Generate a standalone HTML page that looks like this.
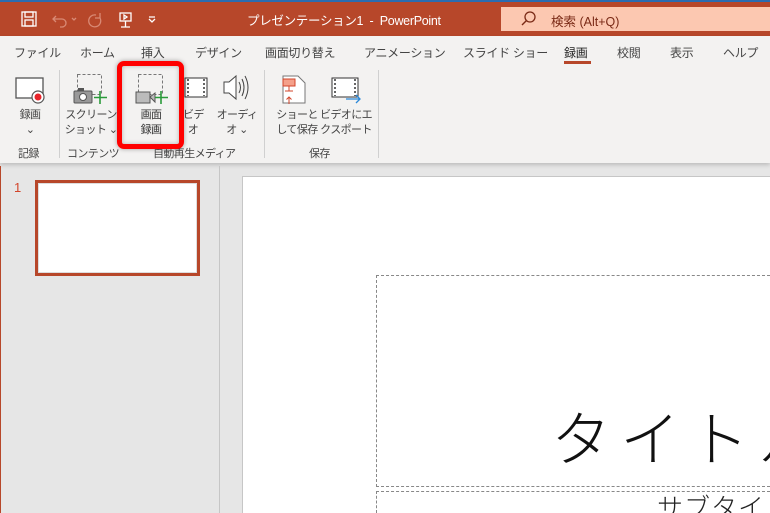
<!DOCTYPE html>
<html><head><meta charset="utf-8"><style>
*{margin:0;padding:0;box-sizing:border-box}
body{width:770px;height:513px;overflow:hidden;position:relative;background:#e6e6e6;font-family:"Liberation Sans","Noto Sans CJK JP",sans-serif;color:#333}
.a{position:absolute;white-space:nowrap}
.t{font-size:12px;color:#444;letter-spacing:-0.3px}
.s{font-size:11px;color:#444;text-align:center;line-height:15px;letter-spacing:-0.6px}
</style></head><body>
<div class="a" style="left:0;top:0;width:770px;height:36px;background:#b7472a"></div>
<div class="a" style="left:0;top:0;width:770px;height:2px;background:#2b6cb0"></div>
<svg class="a" style="left:20px;top:10px" width="150" height="20" viewBox="0 0 150 20">
<g fill="none" stroke="#fff" stroke-width="1.3">
<rect x="2" y="2" width="14" height="14"/><rect x="5" y="2" width="8" height="5"/><rect x="5" y="10" width="8" height="6"/>
</g>
<g fill="none" stroke="#d98a75" stroke-width="1.3">
<path d="M36 6 L33 9 L36 12 M33 9 H42 A4 4 0 0 1 42 17 H40"/><path d="M52 8 l2 2 2-2"/>
<path d="M76 5 A6 6 0 1 0 80 8 M80 3 V8 H75"/>
</g>
<g fill="none" stroke="#fff" stroke-width="1.3"><rect x="100" y="3" width="11" height="8"/><path d="M105.5 11 V17 M101 17 H110 M104 5 l3 2 -3 2z"/><path d="M129 9 l3 3 3-3 M129 7 H135"/></g>
</svg>
<div class="a" style="left:247px;top:10px;font-size:12.5px;color:#fff;letter-spacing:-0.3px">プレゼンテーション1 &nbsp;- &nbsp;PowerPoint</div>
<div class="a" style="left:501px;top:7px;width:269px;height:24px;background:#fcc8b1"></div>
<svg class="a" style="left:520px;top:10px" width="18" height="18"><circle cx="10" cy="7" r="5" fill="none" stroke="#7a2a16" stroke-width="1.3"/><path d="M6.5 10.5 L2 15" stroke="#7a2a16" stroke-width="1.4"/></svg>
<div class="a" style="left:551px;top:11px;font-size:12.5px;color:#7a2a16">検索 (Alt+Q)</div>
<div class="a" style="left:0;top:36px;width:770px;height:127px;background:#f3f2f1;box-shadow:0 2px 4px rgba(0,0,0,.18)"></div>
<div class="a t" style="left:14px;top:44px">ファイル</div>
<div class="a t" style="left:80px;top:44px">ホーム</div>
<div class="a t" style="left:141px;top:44px">挿入</div>
<div class="a t" style="left:195px;top:44px">デザイン</div>
<div class="a t" style="left:265px;top:44px">画面切り替え</div>
<div class="a t" style="left:364px;top:44px">アニメーション</div>
<div class="a t" style="left:463px;top:44px">スライド ショー</div>
<div class="a t" style="left:564px;top:44px;color:#222">録画</div>
<div class="a" style="left:564px;top:61px;width:27px;height:3px;background:#b7472a"></div>
<div class="a t" style="left:617px;top:44px">校閲</div>
<div class="a t" style="left:670px;top:44px">表示</div>
<div class="a t" style="left:723px;top:44px">ヘルプ</div>
<div class="a" style="left:59px;top:70px;width:1px;height:88px;background:#d0d0d0"></div>
<div class="a" style="left:264px;top:70px;width:1px;height:88px;background:#d0d0d0"></div>
<div class="a" style="left:378px;top:70px;width:1px;height:88px;background:#d0d0d0"></div>
<svg class="a" style="left:0;top:66px" width="380" height="50" viewBox="0 0 380 50">
<rect x="16" y="12" width="27" height="20" fill="#fff" stroke="#555" stroke-width="1.3"/>
<circle cx="38" cy="31" r="6" fill="#fff" stroke="#555" stroke-width="1.2"/><circle cx="38" cy="31" r="3.5" fill="#e8242b"/>
<rect x="77.5" y="8.5" width="24" height="20" fill="none" stroke="#777" stroke-dasharray="3 2"/>
<rect x="74" y="25" width="18" height="12" rx="1" fill="#999" stroke="#555"/><circle cx="83" cy="31" r="3.5" fill="#fff" stroke="#555"/><rect x="78" y="22" width="6" height="3" fill="#555"/>
<path d="M100 25 V38 M94 31.5 H107" stroke="#2a9a3a" stroke-width="1.6"/>
<rect x="138.5" y="8.5" width="24" height="20" fill="none" stroke="#777" stroke-dasharray="3 2"/>
<rect x="136" y="26" width="14" height="11" fill="#bbb" stroke="#555"/><path d="M150 31 L155 27 V36 Z" fill="#bbb" stroke="#555"/>
<path d="M161 25 V38 M155 31.5 H168" stroke="#2a9a3a" stroke-width="1.6"/>
<rect x="185" y="12" width="22" height="19" fill="#fff" stroke="#333"/><path d="M188 13v17M204 13v17" stroke="#333" stroke-dasharray="2 2" stroke-width="1.5"/>
<path d="M224 16 H229 L236 10 V33 L229 27 H224 Z" fill="#fff" stroke="#444"/><path d="M239 16 Q242 21.5 239 27 M242 13 Q246 21.5 242 30 M245 10 Q251 21.5 245 33" fill="none" stroke="#444"/>
<path d="M283 10 H298 L305 17 V37 H283 Z" fill="#fff" stroke="#777"/><rect x="283" y="13" width="12" height="7" fill="#f4a08a" stroke="#d2452b"/><path d="M289 20v5M285 25h8" stroke="#d2452b"/><path d="M289 38v-7M286.5 33.5l2.5-2.5 2.5 2.5" fill="none" stroke="#d2452b"/>
<rect x="332" y="12" width="26" height="19" fill="#fff" stroke="#333"/><path d="M335 13v17M355 13v17" stroke="#333" stroke-dasharray="2 2" stroke-width="1.5"/>
<path d="M346 33 H360 M356 29 L360 33 356 37" fill="none" stroke="#2b88d8" stroke-width="1.3"/>
</svg>
<div class="a s" style="left:8px;top:108px;width:44px">録画<br>⌄</div>
<div class="a s" style="left:62px;top:108px;width:58px">スクリーン<br>ショット ⌄</div>
<div class="a s" style="left:125px;top:108px;width:52px;color:#333">画面<br>録画</div>
<div class="a s" style="left:183px;top:108px;width:20px">ビデ<br>オ</div>
<div class="a s" style="left:214px;top:108px;width:46px">オーディ<br>オ ⌄</div>
<div class="a s" style="left:274px;top:108px;width:46px">ショーと<br>して保存</div>
<div class="a s" style="left:320px;top:108px;width:52px">ビデオにエ<br>クスポート</div>
<div class="a s" style="left:18px;top:147px">記録</div>
<div class="a s" style="left:67px;top:147px">コンテンツ</div>
<div class="a s" style="left:153px;top:147px">自動再生メディア</div>
<div class="a s" style="left:309px;top:147px">保存</div>
<div class="a" style="left:117px;top:61px;width:67px;height:88px;border:5px solid #f00;border-radius:7px;box-shadow:0 0 5px rgba(0,0,0,.35), inset 0 0 5px rgba(0,0,0,.25)"></div>
<div class="a" style="left:0;top:166px;width:1px;height:347px;background:#b7472a"></div>
<div class="a" style="left:219px;top:166px;width:1px;height:347px;background:#c6c6c6"></div>
<div class="a" style="left:14px;top:180px;font-size:13px;color:#d2452b">1</div>
<div class="a" style="left:35px;top:180px;width:165px;height:96px;border:3px solid #b7472a;background:#fff;box-shadow:inset 0 0 0 1px #ddd"></div>
<div class="a" style="left:242px;top:176px;width:528px;height:337px;background:#fff;border-left:1px solid #c6c6c6;border-top:1px solid #c6c6c6"></div>
<div class="a" style="left:376px;top:275px;width:394px;height:212px;border:1px dashed #888;border-right:none"></div>
<div class="a" style="left:376px;top:491px;width:394px;height:22px;border:1px dashed #888;border-right:none;border-bottom:none"></div>
<div class="a" style="left:242px;top:380px;width:528px;height:133px;overflow:hidden">
<div class="a" style="left:309px;top:12px;font-size:60px;font-weight:300;letter-spacing:9px;color:#111;font-family:'Noto Sans CJK JP',sans-serif">タイトル</div>
<div class="a" style="left:415px;top:108px;font-size:26px;font-weight:300;letter-spacing:1px;color:#222;font-family:'Noto Sans CJK JP',sans-serif">サブタイトル</div>
</div>
</body></html>
